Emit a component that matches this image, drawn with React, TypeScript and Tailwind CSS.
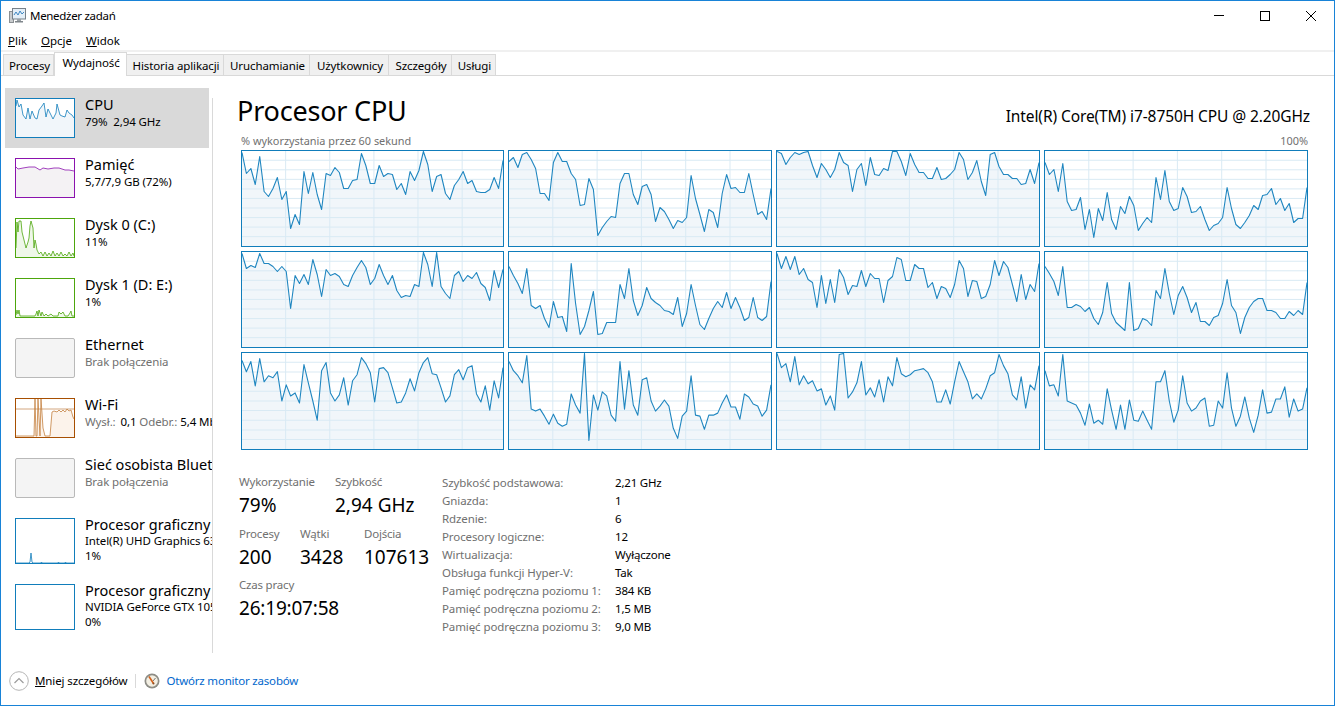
import React from 'react';

const FONT = '"Noto Sans", "Open Sans", sans-serif';

// y offset in px from the top of each core graph, 60 samples
const cores: number[][] = [
  [1,22,17,33,5,40,45,37,26,48,40,77,63,73,20,42,21,43,58,22,24,16,21,37,37,29,28,2,14,32,32,14,25,22,23,38,32,43,20,29,19,0,13,40,25,23,42,48,34,28,20,32,29,40,41,41,38,26,37,9],
  [10,6,16,3,1,8,17,42,42,49,11,1,10,10,22,28,54,53,27,38,84,76,70,65,66,32,22,22,43,53,35,33,43,70,56,60,68,77,69,71,66,24,47,63,80,58,61,76,42,23,37,36,41,41,22,43,63,60,68,37],
  [0,2,13,6,1,3,1,0,14,26,12,18,26,18,1,11,14,40,18,12,34,6,23,24,17,19,0,0,10,24,2,13,21,21,27,27,16,28,27,23,18,1,8,28,21,9,30,44,3,1,15,23,23,27,27,33,32,18,32,11],
  [11,23,18,40,12,50,59,58,46,78,58,86,57,69,41,68,78,55,62,45,54,79,72,66,71,26,48,19,50,59,57,36,45,61,60,55,68,79,74,72,66,36,57,73,77,71,64,54,58,44,43,37,53,47,59,52,71,67,67,36],
  [1,16,13,15,1,11,11,14,19,14,19,56,23,31,22,32,7,22,44,17,23,21,24,32,34,23,15,8,15,32,26,12,23,32,23,38,45,43,44,32,34,0,12,34,0,34,41,46,23,19,29,23,26,20,31,35,48,18,35,17],
  [14,23,31,41,16,53,56,53,66,75,49,65,64,79,11,51,82,74,58,39,82,81,70,70,70,32,46,16,48,63,53,35,46,50,53,58,59,62,45,74,61,32,53,72,77,66,56,49,55,40,56,45,55,68,65,45,65,68,64,29],
  [1,16,4,17,4,22,16,27,30,55,23,51,27,50,17,25,42,33,34,18,34,21,26,26,50,28,24,5,7,28,28,12,16,16,35,30,46,34,36,45,32,8,16,44,28,29,46,44,32,8,23,9,15,32,49,22,47,32,39,11],
  [14,21,29,43,14,55,55,52,54,59,55,66,72,60,30,61,70,74,78,30,78,76,66,68,73,38,46,16,41,62,43,34,45,60,50,69,69,73,65,63,51,27,53,60,81,65,55,49,46,46,58,58,60,66,66,59,63,58,62,30],
  [7,18,8,32,5,28,22,24,18,47,31,42,39,49,11,29,47,66,17,9,39,47,41,24,51,27,21,4,10,19,48,15,14,19,34,49,48,39,25,37,19,9,4,20,21,34,48,42,21,16,26,14,12,40,48,32,56,27,44,14],
  [8,17,22,29,2,55,57,55,62,70,60,69,72,70,40,51,59,0,86,41,56,38,42,61,67,8,55,17,51,61,26,24,47,57,52,46,52,74,84,62,57,22,61,62,75,61,61,59,49,41,53,53,65,40,43,50,52,62,56,31],
  [0,14,10,28,3,31,22,30,27,37,35,51,42,56,1,0,44,38,29,8,41,34,43,26,48,23,32,4,20,23,21,17,16,15,19,28,48,48,36,50,28,8,18,28,45,40,45,35,22,19,1,12,20,41,46,23,54,31,36,12],
  [17,32,31,42,1,47,49,51,59,71,50,69,66,70,35,56,75,51,75,46,66,67,57,66,75,28,28,17,47,68,56,22,49,57,54,47,44,72,71,47,54,19,54,72,62,43,64,78,61,36,59,58,45,45,33,63,45,57,55,34],
];

function CoreGraph({ data }: { data: number[] }) {
  const pts = data.map((y, i) => `${((i * 262) / 59).toFixed(1)},${y + 0.5}`).join(' ');
  return (
    <div className="border border-[#117dbb] bg-white h-full">
      <svg viewBox="0 0 262 95" preserveAspectRatio="none" className="block w-full h-full">
        <polygon points={`0,95 ${pts} 262,95`} fill="#f1f6fa" />
        {[1, 2, 3, 4, 5, 6, 7, 8, 9].map((n) => (
          <line key={n} x1="0" x2="262" y1={n * 9.55 - 0.3} y2={n * 9.55 - 0.3} stroke="#d9eaf4" strokeWidth="1" />
        ))}
        {[1, 2, 3, 4, 5].map((n) => (
          <line key={n} x1={n * 44.3 - 0.5} x2={n * 44.3 - 0.5} y1="0" y2="95" stroke="#d9eaf4" strokeWidth="1" />
        ))}
        <polyline points={pts} fill="none" stroke="#1f86c0" strokeWidth="1.1" strokeLinejoin="round" />
      </svg>
    </div>
  );
}

// sidebar thumbnails
function Thumb({ color, fill, points, line, height = 40, extra }: { color: string; fill: string; points?: string; line?: string; height?: number; extra?: React.ReactNode }) {
  return (
    <svg width="60" height={height} viewBox={`0 0 60 ${height}`} className="block shrink-0">
      <rect x="0.5" y="0.5" width="59" height={height - 1} fill="white" stroke={color} />
      {points && <polygon points={`1,${height - 1} ${points} 59,${height - 1}`} fill={fill} />}
      {extra}
      {points && <polyline points={points} fill="none" stroke={line ?? color} strokeWidth="0.8" />}
      <rect x="0.5" y="0.5" width="59" height={height - 1} fill="none" stroke={color} />
    </svg>
  );
}

function EmptyThumb() {
  return <div className="w-[60px] h-[40px] shrink-0 bg-[#f4f4f4] border border-[#b9b9b9] rounded-[2px]" />;
}

type Item = { name: string; lines: React.ReactNode[]; thumb: React.ReactNode; tall?: boolean; active?: boolean };

const gray = 'text-[#707070]';

const items: Item[] = [
  {
    name: 'CPU',
    active: true,
    lines: ['79%  2,94 GHz'],
    thumb: <Thumb color="#117dbb" fill="#f1f6fa" points="1,8 2,2 4,9 6,6 8,17 11,21 13,10 15,21 17,13 20,20 22,21 24,12 27,8 29,5 31,19 33,11 36,17 38,21 41,15 42,6 45,17 47,18 50,19 52,12 54,15 57,17 59,20" />,
  },
  {
    name: 'Pamięć',
    lines: ['5,7/7,9 GB (72%)'],
    thumb: <Thumb color="#8b12ae" fill="#f4f2f4" points="1,9 3,11 8,10 14,9 20,9 25,12 28,10 33,11 39,10 44,10 50,12 54,12 59,13" />,
  },
  {
    name: 'Dysk 0 (C:)',
    lines: ['11%'],
    thumb: <Thumb color="#4da60c" fill="#eff7e9" points="1,30 2,4 3,14 4,3 6,3 7,14 9,22 11,30 13,24 14,20 15,8 16,3 18,10 19,30 20,22 21,26 22,32 24,36 26,34 28,38 30,34 32,38 34,35 36,38 38,33 40,38 42,35 44,38 46,34 48,38 50,36 52,38 54,34 56,38 58,35 59,38" />,
  },
  {
    name: 'Dysk 1 (D: E:)',
    lines: ['1%'],
    thumb: <Thumb color="#4da60c" fill="#eff7e9" points="1,37 2,32 3,36 4,32 5,38 20,38 21,36 22,33 23,38 24,32 26,38 27,34 29,38 31,36 33,38 36,36 38,38 43,38 44,34 46,36 48,34 50,38 53,38 55,35 56,33 57,38 59,38" />,
  },
  {
    name: 'Ethernet',
    lines: [<span className={gray}>Brak połączenia</span>],
    thumb: <EmptyThumb />,
  },
  {
    name: 'Wi-Fi',
    lines: [
      <>
        <span className={gray}>Wysł.:</span><span className="ml-[2px]"> 0,1 </span><span className={gray}>Odebr.:</span> 5,4 Mb/s
      </>,
    ],
    thumb: (
      <Thumb
        color="#a74f01"
        fill="#fcf3eb"
        line="#c4803f"
        points="1,38 19,38 20,1 21,38 22,38 23,1 25,38 26,1 28,30 30,38 35,38 37,14 39,13 42,14 44,12 46,14 48,12 50,14 52,11 54,13 56,12 58,19 59,21"
        extra={<line x1="1" x2="59" y1="11" y2="11" stroke="#d3a67e" strokeWidth="1" />}
      />
    ),
  },
  {
    name: 'Sieć osobista Bluetooth',
    lines: [<span className={gray}>Brak połączenia</span>],
    thumb: <EmptyThumb />,
  },
  {
    name: 'Procesor graficzny 0',
    tall: true,
    lines: ['Intel(R) UHD Graphics 630', '1%'],
    thumb: <Thumb color="#117dbb" fill="#f1f6fa" height={46} points="1,45 14,45 15,44 16,35 17,44 18,45 26,45 26.5,44 27,45 43,45 43.5,44 44,45 50,45 50.5,44 51,45 59,45" />,
  },
  {
    name: 'Procesor graficzny 1',
    tall: true,
    lines: ['NVIDIA GeForce GTX 1050', '0%'],
    thumb: <Thumb color="#117dbb" fill="#f1f6fa" height={46} />,
  },
];

function SideItem({ item }: { item: Item }) {
  return (
    <div className={`w-[204px] flex pl-[10px] pt-[10px] ${item.tall ? 'h-[66px]' : 'h-[60px]'} ${item.active ? 'bg-[#d9d9d9]' : ''}`}>
      {item.thumb}
      <div className="ml-[10px] -mt-[2px] whitespace-nowrap text-black">
        <div className="text-[14.5px] leading-[17px]">{item.name}</div>
        {item.lines.map((l, i) => (
          <div key={i} className={`text-[11.5px] tracking-[-0.1px] whitespace-pre ${item.tall ? 'leading-[15px]' : 'leading-[17px]'}`}>
            {l}
          </div>
        ))}
      </div>
    </div>
  );
}

function Stat({ label, value, className = '', valueClass = '' }: { label: string; value: string; className?: string; valueClass?: string }) {
  return (
    <div className={className}>
      <div className="text-[11.5px] leading-[16px] text-[#707070] tracking-[-0.2px] whitespace-nowrap">{label}</div>
      <div className={`mt-[2px] text-[19px] leading-[26px] text-black whitespace-nowrap ${valueClass}`}>{value}</div>
    </div>
  );
}

const specs = [
  ['Szybkość podstawowa:', '2,21 GHz'],
  ['Gniazda:', '1'],
  ['Rdzenie:', '6'],
  ['Procesory logiczne:', '12'],
  ['Wirtualizacja:', 'Wyłączone'],
  ['Obsługa funkcji Hyper-V:', 'Tak'],
  ['Pamięć podręczna poziomu 1:', '384 KB'],
  ['Pamięć podręczna poziomu 2:', '1,5 MB'],
  ['Pamięć podręczna poziomu 3:', '9,0 MB'],
];

const tabs = ['Procesy', 'Wydajność', 'Historia aplikacji', 'Uruchamianie', 'Użytkownicy', 'Szczegóły', 'Usługi'];
const tabWidths = ['w-[51px]', 'w-[73px]', 'w-[97px]', 'w-[86px]', 'w-[79px]', 'w-[63px]', 'w-[44px]'];

function AppIcon() {
  return (
    <svg width="17" height="16" viewBox="0 0 17 16" className="shrink-0">
      <rect x="0.5" y="3.5" width="4" height="11" fill="#c9ccce" stroke="#8a8f93" />
      <rect x="3.5" y="0.5" width="13" height="10.5" fill="#e4eff8" stroke="#77818a" />
      <polyline points="5,7 7,4 9,7 11,3 13,6 15,4" fill="none" stroke="#3f87c2" strokeWidth="1" />
      <rect x="8" y="11" width="4" height="2" fill="#9aa1a6" />
      <rect x="6" y="13" width="8" height="1.5" fill="#7f868b" />
    </svg>
  );
}

function MonitorIcon() {
  return (
    <svg width="16" height="16" viewBox="0 0 16 16" className="shrink-0">
      <circle cx="8" cy="8" r="7.5" fill="#8d8d86" />
      <circle cx="8" cy="8" r="5.8" fill="#f3efe3" />
      <path d="M5 3.5 L9.5 10.5" stroke="#d4601a" strokeWidth="1.6" />
      <path d="M11.5 5 L9 8" stroke="#555" strokeWidth="0.8" />
      <circle cx="9.5" cy="10.5" r="1" fill="#8a4a20" />
    </svg>
  );
}

export default function App() {
  return (
    <div className="w-[1335px] h-[706px] flex flex-col bg-white border border-[#1883d7] overflow-hidden text-black" style={{ fontFamily: FONT }}>
      {/* title bar */}
      <div className="h-[29px] flex items-center shrink-0">
        <div className="ml-[8px] mt-[1px]">
          <AppIcon />
        </div>
        <span className="ml-[4px] text-[11.5px] tracking-[-0.3px]">Menedżer zadań</span>
        <div className="ml-auto flex items-center">
          <div className="w-[46px] flex justify-center">
            <div className="w-[10px] h-px bg-black" />
          </div>
          <div className="w-[46px] flex justify-center">
            <div className="w-[10px] h-[10px] border border-black" />
          </div>
          <div className="w-[46px] flex justify-center">
            <svg width="10" height="10" viewBox="0 0 10 10">
              <path d="M0 0 L10 10 M10 0 L0 10" stroke="black" strokeWidth="1" />
            </svg>
          </div>
        </div>
      </div>

      {/* menu */}
      <div className="h-[20px] flex items-end gap-[14px] pl-[7px] text-[11.5px] leading-[19px] shrink-0">
        <span><u>P</u>lik</span>
        <span><u>O</u>pcje</span>
        <span><u>W</u>idok</span>
      </div>
      <div className="h-[2px] bg-[#f0f0f0] shrink-0" />

      {/* tabs */}
      <div className="h-[24px] flex items-end pl-[2px] border-b border-[#d9d9d9] shrink-0">
        {tabs.map((t, i) =>
          i === 1 ? (
            <div key={t} className={`${tabWidths[i]} h-[24px] -mb-px pl-[1px] bg-white border border-b-0 border-[#d9d9d9] text-[11.5px] leading-[20px] text-center tracking-[-0.1px] whitespace-nowrap`}>
              {t}
            </div>
          ) : (
            <div key={t} className={`${tabWidths[i]} h-[21px] pl-[2px] bg-[#f0f0f0] border border-b-0 border-l-0 first:border-l border-[#d9d9d9] text-[11.5px] leading-[21px] text-center tracking-[-0.1px] whitespace-nowrap`}>
              {t}
            </div>
          ),
        )}
      </div>

      {/* body */}
      <div className="flex-1 flex min-h-0">
        <div className="w-[211px] shrink-0 overflow-hidden pl-[4px] pt-[12px]">
          {items.map((it) => (
            <SideItem key={it.name} item={it} />
          ))}
        </div>
        <div className="w-px bg-[#d9d9d9] mt-[22px] mb-[7px] shrink-0" />

        <div className="flex-1 pl-[28px] pr-[26px] min-w-0">
          <div className="flex items-end justify-between h-[53px]">
            <div className="-ml-[4px] -mb-[2px] text-[27px] leading-[40px] tracking-[-0.2px]">Procesor CPU</div>
            <div className="text-[15.5px] leading-[20px] mb-[3px] -mr-[2px] tracking-[-0.1px] whitespace-nowrap">Intel(R) Core(TM) i7-8750H CPU @ 2.20GHz</div>
          </div>
          <div className="flex justify-between text-[10.9px] leading-[14px] mt-[5px] mb-[2px] text-[#707070]">
            <span>% wykorzystania przez 60 sekund</span>
            <span>100%</span>
          </div>
          <div className="grid grid-cols-[263px_264px_264px_264px] grid-rows-[97px_97px_98px] gap-[4px]">
            {cores.map((c, i) => (
              <CoreGraph key={i} data={c} />
            ))}
          </div>

          <div className="flex mt-[24px] -ml-[2px]">
            <div className="w-[203px] shrink-0">
              <div className="flex mb-[8px]">
                <Stat label="Wykorzystanie" value="79%" className="w-[96px]" />
                <Stat label="Szybkość" value="2,94 GHz" />
              </div>
              <div className="flex mb-[7px]">
                <Stat label="Procesy" value="200" className="w-[61px]" />
                <Stat label="Wątki" value="3428" className="w-[64px]" />
                <Stat label="Dojścia" value="107613" />
              </div>
              <Stat label="Czas pracy" value="26:19:07:58" valueClass="tracking-[-0.2px]" />
            </div>
            <div className="text-[11.5px] leading-[18px]">
              {specs.map(([k, v]) => (
                <div key={k} className="flex">
                  <span className="w-[173px] text-[#707070] whitespace-nowrap tracking-[-0.1px]">{k}</span>
                  <span className="whitespace-nowrap tracking-[-0.2px]">{v}</span>
                </div>
              ))}
            </div>
          </div>
        </div>
      </div>

      {/* footer */}
      <div className="h-[45px] shrink-0 flex items-center pl-[8px] pb-[4px] text-[11.5px]">
        <svg width="20" height="20" viewBox="0 0 20 20" className="shrink-0">
          <circle cx="10" cy="10" r="9.3" fill="white" stroke="#b5b5b5" />
          <path d="M5.5 12 L10 7.5 L14.5 12" fill="none" stroke="#9c9c9c" strokeWidth="1.2" />
        </svg>
        <span className="ml-[6px] whitespace-nowrap tracking-[-0.1px]"><u>M</u>niej szczegółów</span>
        <div className="w-px h-[14px] bg-[#d9d9d9] ml-[8px] mr-[8px]" />
        <MonitorIcon />
        <span className="ml-[6px] text-[#0066cc] whitespace-nowrap tracking-[-0.2px]">Otwórz monitor zasobów</span>
      </div>
    </div>
  );
}
